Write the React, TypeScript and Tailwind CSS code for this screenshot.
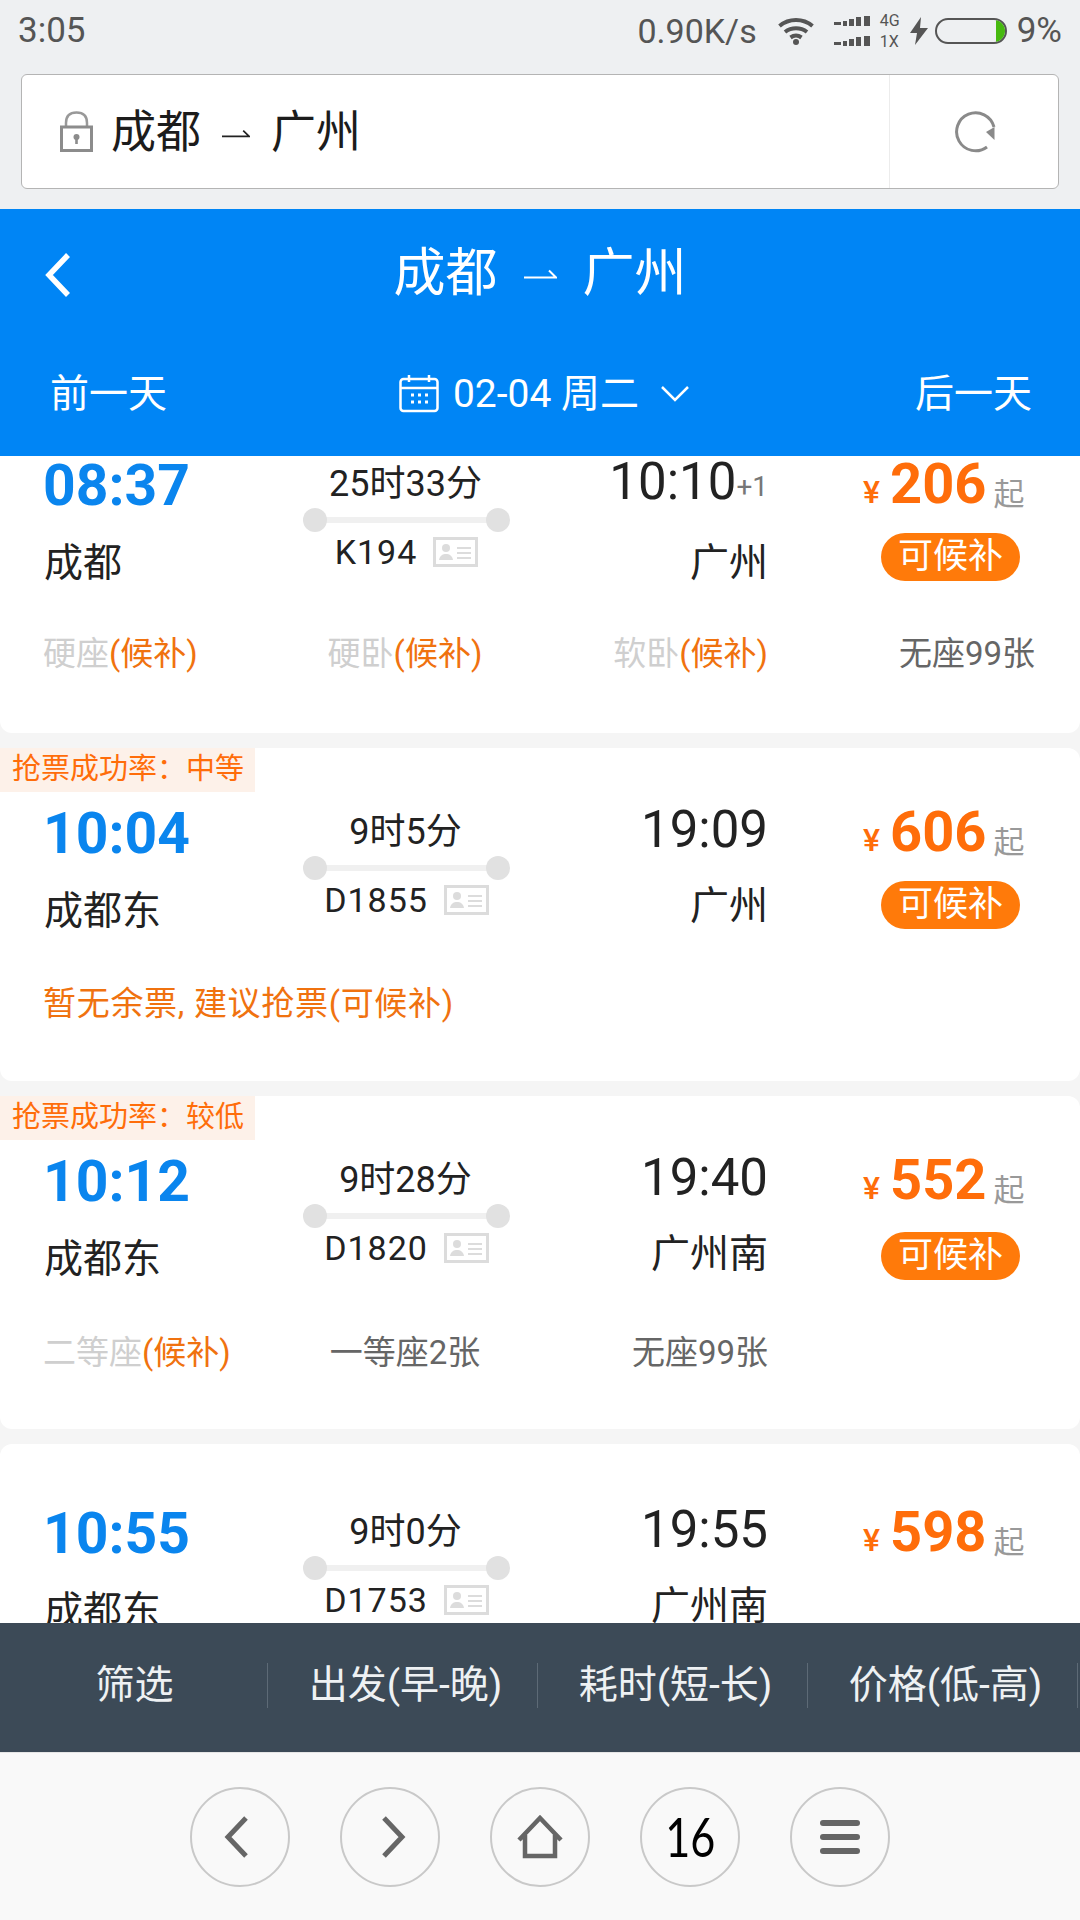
const Arrow = ({ w, h, color }: { w: number; h: number; color: string }) => (
  <svg width={w} height={h} viewBox="0 0 33 10" className="shrink-0" fill="none" stroke={color} strokeWidth="2">
    <path d="M0 8.5H32L25 1.5" />
  </svg>
);

const Route = ({ className, w, h, color }: { className: string; w: number; h: number; color: string }) => (
  <div className={className}>
    <span>成都</span>
    <Arrow w={w} h={h} color={color} />
    <span>广州</span>
  </div>
);

const IdIcon = () => (
  <svg width="45" height="30" viewBox="0 0 45 30" className="shrink-0">
    <rect x="1.5" y="1.5" width="42" height="27" fill="#fff" stroke="#dcdcdc" strokeWidth="3" />
    <circle cx="13" cy="11" r="4" fill="#dcdcdc" />
    <path d="M6 23c1-5 4-6 7-6s6 1 7 6z" fill="#dcdcdc" />
    <path d="M24 11h14M24 16h14M24 21h14" stroke="#dcdcdc" strokeWidth="2" />
  </svg>
);

type Seat = { name?: string; wait?: boolean; text?: string };
type Train = {
  tag?: string;
  dep: string;
  from: string;
  dur: string;
  no: string;
  arr: string;
  plus?: boolean;
  to: string;
  price: string;
  pill: boolean;
  seats?: Seat[];
  note?: string;
};

const trains: Train[] = [
  {
    dep: "08:37", from: "成都", dur: "25时33分", no: "K194", arr: "10:10", plus: true, to: "广州", price: "206", pill: true,
    seats: [{ name: "硬座", wait: true }, { name: "硬卧", wait: true }, { name: "软卧", wait: true }, { text: "无座99张" }],
  },
  {
    tag: "抢票成功率：中等", dep: "10:04", from: "成都东", dur: "9时5分", no: "D1855", arr: "19:09", to: "广州", price: "606", pill: true,
    note: "暂无余票, 建议抢票(可候补)",
  },
  {
    tag: "抢票成功率：较低", dep: "10:12", from: "成都东", dur: "9时28分", no: "D1820", arr: "19:40", to: "广州南", price: "552", pill: true,
    seats: [{ name: "二等座", wait: true }, { text: "一等座2张" }, { text: "无座99张" }],
  },
  { dep: "10:55", from: "成都东", dur: "9时0分", no: "D1753", arr: "19:55", to: "广州南", price: "598", pill: false },
];

const seatAlign = ["justify-start w-[252px]", "justify-center w-[220px]", "justify-end w-[253px]", "justify-end w-[267px]"];

const Card = ({ t }: { t: Train }) => (
  <div className={`relative h-[333px] shrink-0 rounded-[12px] bg-white pl-[43px] ${t.pill ? "pt-[58px]" : "pt-[62px]"}`}>
    {t.tag && (
      <div className="absolute left-0 top-0 flex h-[44px] w-[255px] items-center pl-[12px] text-[29px] text-[#ff6d0a] bg-[#fdf1e9]">
        {t.tag}
      </div>
    )}
    <div className="flex h-[134px]">
      <div className="flex w-[260px] flex-col">
        <div className="flex h-[54px] items-center text-[57px] font-bold leading-none text-[#0a85ee]">{t.dep}</div>
        <div className="mt-[22px] flex h-[60px] items-center pl-[1px] text-[39px] text-[#222]">{t.from}</div>
      </div>
      <div className="flex w-[207px] flex-col items-center">
        <div className="-ml-[2px] flex h-[50px] items-center pt-[2px] text-[36px] leading-none text-[#222]">{t.dur}</div>
        <div className="relative flex h-[24px] w-full items-center justify-between">
          <div className="absolute left-[12px] right-[12px] h-[6px] bg-[#f0f0f0]" />
          <div className="relative h-[24px] w-[24px] rounded-full bg-[#e1e1e1]" />
          <div className="relative h-[24px] w-[24px] rounded-full bg-[#e1e1e1]" />
        </div>
        <div className="mt-[1px] flex h-[38px] items-center gap-[16px] text-[34px] leading-none text-[#222]">
          <span className="tracking-[1px]">{t.no}</span>
          <IdIcon />
        </div>
      </div>
      <div className="flex w-[258px] flex-col items-end">
        <div className="-mt-[1px] flex h-[48px] items-center text-[51px] leading-none text-[#222]">
          {t.arr}
          {t.plus && <span className="mt-[12px] text-[28px] text-[#777]">+1</span>}
        </div>
        <div className={`flex h-[60px] items-center text-[39px] text-[#222] ${t.plus ? "mt-[29px]" : "mt-[23px]"}`}>{t.to}</div>
      </div>
      <div className="flex flex-col pl-[95px]">
        <div className="flex h-[54px] items-end leading-none">
          <span className="mb-[4px] text-[32px] font-medium text-[#ff6d0a]">¥</span>
          <span className="ml-[10px] text-[56px] font-bold text-[#ff6d0a]">{t.price}</span>
          <span className="mb-[2px] ml-[7px] text-[31px] text-[#999]">起</span>
        </div>
        {t.pill && (
          <div
            className={`ml-[18px] flex h-[48px] w-[139px] items-center justify-center rounded-full bg-[#ff7a0a] text-[35px] text-white ${
              t.seats && !t.seats[3] ? "mt-[24px]" : "mt-[21px]"
            }`}
          >
            可候补
          </div>
        )}
      </div>
    </div>
    {t.seats && (
      <div className={`flex h-[44px] items-center text-[33px] ${t.seats[3] ? "mt-[40px]" : "mt-[43px]"}`}>
        {t.seats.map((s, i) => (
          <div key={i} className={`flex ${seatAlign[i]}`}>
            {s.text ? (
              <span className="text-[#666]">{s.text}</span>
            ) : (
              <>
                <span className="text-[#cfcfcf]">{s.name}</span>
                <span className="text-[#f0720f]">(候补)</span>
              </>
            )}
          </div>
        ))}
      </div>
    )}
    {t.note && <div className="mt-[42px] flex h-[44px] items-center text-[33px] text-[#f0720f] tracking-[0.7px]">{t.note}</div>}
  </div>
);

const Circle = ({ children }: { children: React.ReactNode }) => (
  <div className="flex h-[100px] w-[100px] items-center justify-center rounded-full border-2 border-[#c9c9c9]">{children}</div>
);

const Signal = () => (
  <svg width="37" height="10" viewBox="0 0 37 10" fill="#555">
    <rect x="0" y="6" width="7" height="3" />
    <rect x="9" y="5" width="4" height="5" />
    <rect x="15" y="3" width="5" height="7" />
    <rect x="22" y="1" width="5" height="9" />
    <rect x="30" y="0" width="6" height="10" />
  </svg>
);

export default function App() {
  return (
    <div className="flex h-[1920px] w-[1080px] flex-col overflow-hidden bg-[#eef0f2] font-[Roboto,'Noto_Sans_CJK_SC',sans-serif]">
      {/* status bar */}
      <div className="flex h-[62px] shrink-0 items-center justify-between pl-[18px] pr-[18px] text-[35px] text-[#555]">
        <span>3:05</span>
        <div className="flex items-center">
          <span className="text-[34px]">0.90K/s</span>
          <svg width="36" height="28" viewBox="0 0 36 28" fill="none" stroke="#555" strokeWidth="4" className="ml-[21px]">
            <path d="M1.5 9C11 1 25 1 34.5 9M7 15c6.500-5 15.500-5 22 0M12.500 20.500c3.500-2.500 7.500-2.500 11 0" />
            <circle cx="18" cy="25" r="3" fill="#555" stroke="none" />
          </svg>
          <div className="ml-[20px] flex flex-col gap-[10px]">
            <Signal />
            <Signal />
          </div>
          <div className="ml-[9px] flex w-[22px] flex-col gap-[8px] text-[16px] leading-[13px]">
            <span>4G</span>
            <span>1X</span>
          </div>
          <svg width="18" height="28" viewBox="0 0 18 28" fill="#555" className="ml-[8px]">
            <path d="M11 0L0 16h7L5 28l13-17h-8z" />
          </svg>
          <div className="relative ml-[7px] h-[26px] w-[72px] overflow-hidden rounded-[13px] border-2 border-[#555]">
            <div className="absolute bottom-0 right-0 top-0 w-[9px] bg-[#46b90f]" />
          </div>
          <span className="ml-[10px]">9%</span>
        </div>
      </div>

      {/* address bar */}
      <div className="mx-[21px] mt-[12px] flex h-[115px] shrink-0 rounded-[6px] border border-[#b4b4b4] bg-white">
        <div className="flex flex-1 items-center pl-[38px]">
          <svg width="33" height="41" viewBox="0 0 33 41" fill="none" className="shrink-0">
            <path d="M6 17V12C6 5 10 1.500 16.500 1.500S27 5 27 12v5" stroke="#999" strokeWidth="2.500" />
            <rect x="1.500" y="16" width="30" height="23.500" stroke="#8c8c8c" strokeWidth="3" />
            <circle cx="16.500" cy="26" r="3" fill="#8c8c8c" />
            <rect x="15.200" y="26" width="2.600" height="7" fill="#8c8c8c" />
          </svg>
          <Route className="ml-[18px] mt-[3px] flex items-center gap-[21px] text-[45px] text-[#1c1c1c]" w={28} h={9} color="#222" />
        </div>
        <div className="flex w-[169px] items-center justify-center border-l border-[#ececec]">
          <svg width="44" height="44" viewBox="0 0 44 44" fill="none" className="ml-[2px] mt-[1px]">
            <path d="M41 17A19 19 0 1 0 34 37" stroke="#8a8a8a" strokeWidth="3" />
            <path d="M41.500 17V30L33 22z" fill="#8a8a8a" />
          </svg>
        </div>
      </div>

      {/* blue header */}
      <div className="mt-[20px] flex h-[247px] shrink-0 flex-col bg-[#0085f5] text-white">
        <div className="relative flex h-[126px] items-center justify-center pt-[3px]">
          <svg width="30" height="44" viewBox="0 0 30 44" fill="none" stroke="#fff" strokeWidth="5.500" className="absolute left-[43px] top-[44px]">
            <path d="M25 2L6 22l19 20" />
          </svg>
          <Route className="flex items-center gap-[26px] text-[52px]" w={33} h={10} color="#fff" />
        </div>
        <div className="flex flex-1 items-center justify-between pb-[3px] pl-[50px] pr-[48px] text-[39px]">
          <span>前一天</span>
          <div className="ml-[7px] flex items-center">
            <svg width="40" height="38" viewBox="0 0 40 38" fill="none" stroke="#fff" strokeWidth="2.500">
              <rect x="1.500" y="4" width="37" height="32" rx="3" />
              <path d="M1.500 13h37M10 0v7M30 0v7" />
              <path d="M12 20h3M19 20h3M26 20h3M12 27h3M19 27h3M26 27h3" strokeWidth="3" />
            </svg>
            <span className="ml-[14px]">02-04 周二</span>
            <svg width="30" height="18" viewBox="0 0 30 18" fill="none" stroke="#fff" strokeWidth="2.500" className="ml-[21px]">
              <path d="M2 2l13 13L28 2" />
            </svg>
          </div>
          <span>后一天</span>
        </div>
      </div>

      {/* list */}
      <div className="min-h-0 flex-1 overflow-hidden bg-[#f5f5f5]">
        <div className="-mt-[56px] flex flex-col gap-[15px]">
          {trains.map((t) => (
            <Card key={t.no} t={t} />
          ))}
        </div>
      </div>

      {/* sort bar */}
      <div className="flex h-[129px] shrink-0 bg-[#3c4a57] pb-[5px] text-[39px] text-[#eef1f3]">
        {["筛选", "出发(早-晚)", "耗时(短-长)", "价格(低-高)"].map((s, i) => (
          <div key={s} className={`flex items-center justify-center ${i === 0 ? "w-[268px]" : "w-[270px]"}`}>
            <div className={`flex h-[45px] w-full items-center justify-center border-r border-[#5d6a76] ${i === 0 ? "pl-[2px]" : "pl-[6px]"}`}>{s}</div>
          </div>
        ))}
      </div>

      {/* browser nav */}
      <div className="flex h-[168px] shrink-0 items-center justify-center gap-[50px] border-t border-[#e6e6e6] bg-[#f9f9f9]">
        <Circle>
          <svg width="26" height="42" viewBox="0 0 26 42" fill="none" stroke="#666" strokeWidth="5" className="mr-[6px]">
            <path d="M22 2L4 21l18 19" />
          </svg>
        </Circle>
        <Circle>
          <svg width="26" height="42" viewBox="0 0 26 42" fill="none" stroke="#666" strokeWidth="5" className="ml-[6px]">
            <path d="M4 2l18 19L4 40" />
          </svg>
        </Circle>
        <Circle>
          <svg width="46" height="44" viewBox="0 0 46 44" fill="none" stroke="#666" strokeWidth="4.500">
            <path d="M2 25L23 3l21 22M8 20v21h30V20" />
          </svg>
        </Circle>
        <Circle>
          <span className="scale-x-[0.8] font-[Lato,sans-serif] text-[54px] leading-none text-black">16</span>
        </Circle>
        <Circle>
          <div className="flex w-[40px] flex-col gap-[8px]">
            <div className="h-[6px] rounded-full bg-[#666]" />
            <div className="h-[6px] rounded-full bg-[#666]" />
            <div className="h-[6px] rounded-full bg-[#666]" />
          </div>
        </Circle>
      </div>
    </div>
  );
}
